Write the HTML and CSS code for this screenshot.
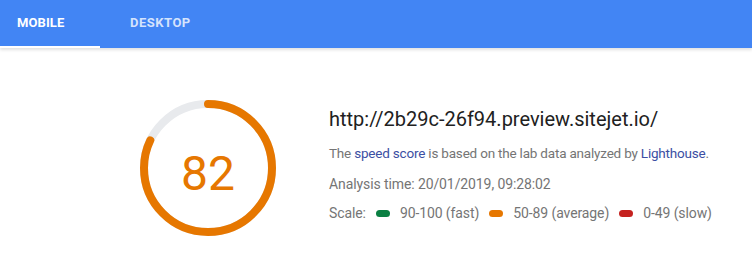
FILE: index.html
```html
<!DOCTYPE html>
<html>
<head>
<meta charset="utf-8">
<link rel="stylesheet" href="styles.css">
</head>
<body>
<header class="tabs">
  <div class="tab tab-active">Mobile</div>
  <div class="tab tab-desktop">Desktop</div>
</header>
<main class="summary">
  <svg class="gauge" width="136" height="136" viewBox="0 0 136 136">
    <circle cx="68" cy="68" r="64" fill="none" stroke="#e8eaed" stroke-width="8"/>
    <circle cx="68" cy="68" r="64" fill="none" stroke="#e67700" stroke-width="8" stroke-linecap="round" stroke-dasharray="329.74 402.12" transform="rotate(-90 68 68)"/>
    <text x="68" y="90" text-anchor="middle" class="gauge-score">82</text>
  </svg>
  <div class="info">
    <div class="url">http://2b29c-26f94.preview.sitejet.io/</div>
    <p class="line line-desc">The <a class="link">speed score</a> is based on the lab data analyzed by <a class="link">Lighthouse</a>.</p>
    <p class="line line-time">Analysis time: 20/01/2019, 09:28:02</p>
    <p class="line line-scale">Scale:<span class="pill pill-fast"></span>90-100 (fast)<span class="pill pill-avg"></span>50-89 (average)<span class="pill pill-slow"></span>0-49 (slow)</p>
  </div>
</main>
</body>
</html>
```
FILE: styles.css
```css
html, body {
  margin: 0;
  padding: 0;
  background: #ffffff;
  font-family: Roboto, "Liberation Sans", Arial, sans-serif;
}
.tabs {
  display: flex;
  height: 48px;
  background: #4285f4;
  box-shadow: 0 2px 3px rgba(0,0,0,0.12);
}
.tab {
  box-sizing: border-box;
  height: 48px;
  line-height: 46px;
  font-size: 13px;
  font-weight: 700;
  text-transform: uppercase;
  color: rgba(255,255,255,0.78);
  letter-spacing: 0.1px;
}
.tab-active {
  width: 100px;
  padding-left: 17px;
  color: #ffffff;
  border-bottom: 2px solid #ffffff;
}
.tab-desktop {
  padding-left: 30px;
  letter-spacing: 0.5px;
}
.summary {
  display: flex;
  padding: 52px 0 0 140px;
  gap: 53px;
}
.gauge {
  flex: none;
}
.gauge-score {
  font-family: Roboto, "Liberation Sans", Arial, sans-serif;
  font-size: 48px;
  fill: #e67700;
}
.info {
  padding-top: 7px;
}
.url {
  font-size: 20px;
  line-height: 24px;
  color: #212121;
}
.line {
  margin: 0;
  font-size: 14px;
  line-height: 16px;
  color: #757575;
  letter-spacing: -0.1px;
}
.line-desc {
  font-size: 13.5px;
  letter-spacing: -0.2px;
  margin-top: 14px;
}
.line-time {
  margin-top: 15px;
}
.line-scale {
  margin-top: 13px;
}
.link {
  color: #3c4fa3;
}
.pill {
  display: inline-block;
  width: 14px;
  height: 7px;
  border-radius: 4px;
  margin: 0 10px;
  vertical-align: 1px;
}
.pill-fast { background: #0b8043; }
.pill-avg { background: #e67700; }
.pill-slow { background: #c5221f; }
```
